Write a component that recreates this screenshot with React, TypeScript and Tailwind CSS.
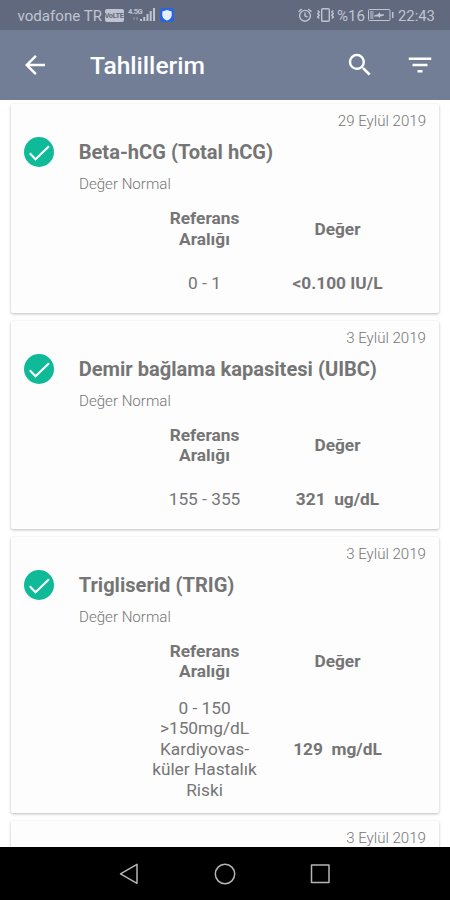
import { ReactNode } from "react";

type Result = {
  name: string;
  date: string;
  range: string[];
  value: string;
};

const results: Result[] = [
  { name: "Beta-hCG (Total hCG)", date: "29 Eylül 2019", range: ["0 - 1"], value: "<0.100 IU/L" },
  { name: "Demir bağlama kapasitesi (UIBC)", date: "3 Eylül 2019", range: ["155 - 355"], value: "321  ug/dL" },
  {
    name: "Trigliserid (TRIG)",
    date: "3 Eylül 2019",
    range: ["0 - 150", ">150mg/dL", "Kardiyovas-", "küler Hastalık", "Riski"],
    value: "129  mg/dL",
  },
];

function StatusBar() {
  return (
    <div className="flex h-[30px] shrink-0 items-center bg-[#61697f] pl-[17.5px] pr-[15px] text-[#c0c4d0]">
      <span className="mt-px w-[87px] whitespace-nowrap text-[15.1px] leading-[30px]">vodafone TR</span>
      <span className="flex h-[13px] w-[19px] items-center justify-center rounded-[2px] bg-[#c0c4d0] text-[7.5px] font-bold leading-[13px] tracking-[-0.4px] text-[#61697f]">
        VoLTE
      </span>
      <div className="ml-[4.5px] flex h-4 w-[27px]">
        <span className="h-[9px] w-[14px] shrink-0 whitespace-nowrap text-[7.5px] font-bold leading-[9px] tracking-[-0.4px]">4.5G</span>
        <svg className="-ml-[9px] shrink-0" width="22" height="16" viewBox="0 0 22 16" fill="currentColor">
          <path d="M0 10h2v3H0zM3 10h2v3H3z" opacity=".3" />
          <path d="M7 12h2v2H7zM10.300 10h2v4h-2zM13.500 7h2v7h-2zM16.700 4h2v10h-2zM20 1h2v13h-2z" />
        </svg>
      </div>
      <svg className="ml-[5px]" width="14" height="14" viewBox="0 0 14 14">
        <rect width="14" height="14" rx="3" fill="#2865dc" />
        <path d="M7 2l4.700 1.500v4C11.700 9.800 9.600 11.600 7 12.500 4.400 11.600 2.300 9.800 2.300 7.500v-4z" fill="#e6efff" />
      </svg>
      <div className="ml-auto flex items-center">
        <svg width="14" height="14" viewBox="0 0 14 14" fill="none" stroke="currentColor" strokeWidth="1.400">
          <circle cx="7" cy="7.800" r="5.400" />
          <path d="M7 4.500v3.300l2.500 1.200M.5 3.700L3.700 1M13.500 3.700L10.300 1" />
        </svg>
        <svg className="ml-[5px]" width="17" height="14" viewBox="0 0 17 14" fill="none" stroke="currentColor" strokeWidth="1.400">
          <rect x="4.700" y=".7" width="7.600" height="12.600" rx="1" />
          <path d="M.6 2.500l1.700 1.500-1.700 1.700 1.700 1.600-1.700 1.700 1.700 1.500M16.400 2.500l-1.700 1.500 1.700 1.700-1.700 1.600 1.700 1.700-1.700 1.500" />
        </svg>
        <span className="ml-[3px] mt-px w-[27px] whitespace-nowrap text-[15.1px] leading-[30px]">%16</span>
        <svg className="ml-[4px]" width="26" height="12" viewBox="0 0 26 12" fill="none" stroke="currentColor">
          <rect x=".5" y=".5" width="21.500" height="11" rx="1" />
          <path d="M2 2h3.500v8H2z" fill="currentColor" stroke="none" opacity=".55" />
          <path d="M6 6.500l4-1.300 1.500-2 .8 2H16v1.300l-3.700 1-1 1.800-.8-1.800H6z" fill="currentColor" stroke="none" />
          <path d="M24.700 3v6" strokeWidth="1.500" />
        </svg>
        <span className="ml-[4px] mt-px w-[37px] whitespace-nowrap text-[14.8px] leading-[30px]">22:43</span>
      </div>
    </div>
  );
}

function AppBar() {
  return (
    <header className="flex h-[70px] shrink-0 items-center bg-[#727d96] text-white">
      <svg className="ml-[20px]" width="30" height="30" viewBox="0 0 24 24" fill="currentColor">
        <path d="M20 11H7.830l5.590-5.590L12 4l-8 8 8 8 1.410-1.410L7.830 13H20v-2z" />
      </svg>
      <h1 className="ml-[40px] mt-[2px] text-[24.6px] font-medium leading-[30px]">Tahlillerim</h1>
      <svg className="ml-auto" width="30" height="30" viewBox="0 0 24 24" fill="currentColor">
        <path d="M15.500 14h-.79l-.28-.27A6.471 6.471 0 0 0 16 9.500 6.500 6.500 0 1 0 9.500 16c1.610 0 3.090-.59 4.230-1.570l.27.28v.79l5 4.990L20.490 19l-4.990-5zm-6 0C7.010 14 5 11.990 5 9.500S7.010 5 9.500 5 14 7.010 14 9.500 11.990 14 9.500 14z" />
      </svg>
      <svg className="ml-[30px] mr-[15px]" width="30" height="30" viewBox="0 0 24 24" fill="currentColor">
        <path d="M10 18h4v-2h-4v2zM3 6v2h18V6H3zm3 7h12v-2H6v2z" />
      </svg>
    </header>
  );
}

function Card({ date, children }: { date: string; children?: ReactNode }) {
  return (
    <section className="shrink-0 rounded-[2px] bg-[#fdfdfd] pb-[12.8px] pt-2 shadow-[0_1px_3px_rgba(0,0,0,0.27)]">
      <p className="pr-[13px] text-right text-[15.1px] font-light leading-[19px] text-[#757575]">{date}</p>
      {children}
    </section>
  );
}

function ResultCard({ result }: { result: Result }) {
  return (
    <Card date={result.date}>
      <div className="mt-[6px] flex h-[30px] items-center pl-[12.7px]">
        <svg width="30" height="30" viewBox="0 0 30 30" fill="none">
          <circle cx="15" cy="15" r="15" fill="#0fba98" />
          <path d="M5.800 16.300l5.700 6L25 9.300" stroke="#fff" strokeWidth="2.100" />
        </svg>
        <h2 className="ml-[25px] whitespace-nowrap text-[20.1px] font-bold leading-6 text-[#757575]">{result.name}</h2>
      </div>
      <p className="ml-[68px] mt-[8px] text-[15.1px] font-light leading-[19px] text-[#757575]">Değer Normal</p>
      <div className="ml-[127px] mt-[14px] grid grid-cols-[133px_133px] text-center text-[17.3px] leading-[20.4px] text-[#757575]">
        <div className="font-bold">
          Referans
          <br />
          Aralığı
        </div>
        <div className="self-center font-bold">Değer</div>
        <div className="mt-[16.5px] flex min-h-[34px] flex-col justify-center">
          {result.range.map((line) => (
            <span key={line}>{line}</span>
          ))}
        </div>
        <div className="mt-[16.5px] self-center whitespace-pre font-bold">{result.value}</div>
      </div>
    </Card>
  );
}

function NavBar() {
  return (
    <nav className="flex h-[53px] shrink-0 items-center justify-center gap-[71px] bg-black">
      <svg width="24" height="24" viewBox="0 0 24 24" fill="none" stroke="#b5b5b5" strokeWidth="1.500" strokeLinejoin="round">
        <path d="M19 2.300v19L2.500 11.800z" />
      </svg>
      <svg width="24" height="24" viewBox="0 0 24 24" fill="none" stroke="#b5b5b5" strokeWidth="1.500">
        <circle cx="12" cy="12" r="9.700" />
      </svg>
      <svg width="24" height="24" viewBox="0 0 24 24" fill="none" stroke="#b5b5b5" strokeWidth="1.500" strokeLinejoin="round">
        <path d="M3.500 3.100h17.500v17.500H3.500z" />
      </svg>
    </nav>
  );
}

export default function App() {
  return (
    <div className="flex h-[900px] w-[450px] flex-col overflow-hidden bg-white font-[Roboto,sans-serif]">
      <StatusBar />
      <AppBar />
      <main className="flex min-h-0 flex-1 flex-col gap-2 overflow-hidden px-[11px] pt-[4.400px]">
        {results.map((result) => (
          <ResultCard key={result.name} result={result} />
        ))}
        <Card date="3 Eylül 2019" />
      </main>
      <NavBar />
    </div>
  );
}
